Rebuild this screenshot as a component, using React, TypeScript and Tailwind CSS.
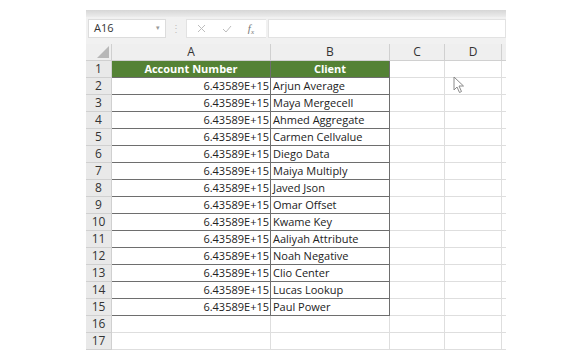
import React from "react";

const clients = [
  "Arjun Average",
  "Maya Mergecell",
  "Ahmed Aggregate",
  "Carmen Cellvalue",
  "Diego Data",
  "Maiya Multiply",
  "Javed Json",
  "Omar Offset",
  "Kwame Key",
  "Aaliyah Attribute",
  "Noah Negative",
  "Clio Center",
  "Lucas Lookup",
  "Paul Power",
];

function Cursor() {
  return (
    <svg width="12" height="18" viewBox="0 0 12 18" className="absolute left-[453px] top-[76px]">
      <path d="M1 1 L1 14 L4 11 L6.5 16.5 L8.5 15.5 L6 10 L10.5 10 Z" fill="#ffffff" stroke="#8a8a8a" strokeWidth="1" strokeLinejoin="round" />
    </svg>
  );
}

export default function App() {
  const rows = Array.from({ length: 17 }, (_, i) => i + 1);
  return (
    <div className="relative w-[576px] h-[360px] bg-white overflow-hidden" style={{ fontFamily: '"Open Sans", "Liberation Sans", Arial, sans-serif' }}>
      <div className="ml-[86px] mt-[10px] w-[420px] flex flex-col">
        {/* top shadow band */}
        <div className="h-[7px] bg-gradient-to-b from-[#d6d6d6] to-[#ececec]" />
        {/* formula bar */}
        <div className="h-[27px] bg-[#f1f1f1] flex items-start pt-[2px] text-[#444]">
          <div className="ml-[2px] w-[78px] h-[19px] bg-white border border-[#dcdcdc] flex items-center pl-[5px] text-[11px] text-[#333]">
            <span className="flex-1">A16</span>
            <span className="text-[7px] text-[#999] mr-[5px]">▾</span>
          </div>
          <div className="w-[20px] h-[19px] flex items-center justify-center text-[10px] text-[#c0c0c0]">⋮</div>
          <div className="w-[80px] h-[19px] bg-white border-y border-l border-[#e2e2e2] flex items-center justify-around pl-[2px] pr-[4px] text-[#b5b5b5]">
            <svg width="9" height="9" viewBox="0 0 9 9"><path d="M1 1 L8 8 M8 1 L1 8" stroke="#bdbdbd" strokeWidth="1" /></svg>
            <svg width="10" height="8" viewBox="0 0 10 8"><path d="M1 4 L4 7 L9 1" stroke="#bdbdbd" strokeWidth="1" fill="none" /></svg>
            <span className="text-[11px] italic text-[#777]" style={{ fontFamily: '"Liberation Serif", serif' }}>f<sub className="text-[7px]">x</sub></span>
          </div>
          <div className="w-[2px]" />
          <div className="flex-1 h-[19px] bg-white border border-[#e2e2e2]" />
        </div>
        {/* column header */}
        <div className="flex h-[17px] bg-[#efefef] text-[12px] text-[#333] border-b border-[#d0d0d0]">
          <div className="w-[26px] border-r border-[#d0d0d0] relative">
            <svg width="12" height="12" viewBox="0 0 12 12" className="absolute right-[2px] bottom-[2px]"><path d="M12 0 L12 12 L0 12 Z" fill="#b8b8b8" /></svg>
          </div>
          <div className="w-[159px] flex items-center justify-center border-r border-[#d0d0d0]">A</div>
          <div className="w-[119px] flex items-center justify-center border-r border-[#d0d0d0]">B</div>
          <div className="w-[55px] flex items-center justify-center border-r border-[#d0d0d0]">C</div>
          <div className="w-[57px] flex items-center justify-center border-r border-[#d0d0d0]">D</div>
          <div className="flex-1" />
        </div>
        {/* rows */}
        {rows.map((r) => {
          const isHeader = r === 1;
          const isData = r >= 2 && r <= 15;
          const inTable = r <= 15;
          return (
            <div key={r} className="flex h-[17px] text-[11px] text-[#222]">
              <div className="w-[26px] bg-[#e9e9e9] border-r border-b border-[#d0d0d0] flex items-center justify-center text-[12px] text-[#333]">{r}</div>
              <div
                className={
                  inTable
                    ? isHeader
                      ? "w-[159px] border-b border-r border-[#6e6e6e] flex items-center justify-center bg-[#548235] text-white font-bold"
                      : "w-[159px] border-b border-r border-[#6e6e6e] flex items-center justify-end pr-[1px]"
                    : "w-[159px] border-b border-r border-[#dedede]"
                }
              >
                {isHeader ? "Account Number" : isData ? "6.43589E+15" : ""}
              </div>
              <div
                className={
                  inTable
                    ? isHeader
                      ? "w-[119px] border-b border-r border-[#6e6e6e] flex items-center justify-center bg-[#548235] text-white font-bold"
                      : "w-[119px] border-b border-r border-[#6e6e6e] flex items-center pl-[2px]"
                    : "w-[119px] border-b border-r border-[#dedede]"
                }
              >
                {isHeader ? "Client" : isData ? clients[r - 2] : ""}
              </div>
              <div className="w-[55px] border-r border-b border-[#dedede]" />
              <div className="w-[57px] border-r border-b border-[#dedede]" />
              <div className="flex-1 border-b border-[#dedede]" />
            </div>
          );
        })}
      </div>
      <Cursor />
    </div>
  );
}
